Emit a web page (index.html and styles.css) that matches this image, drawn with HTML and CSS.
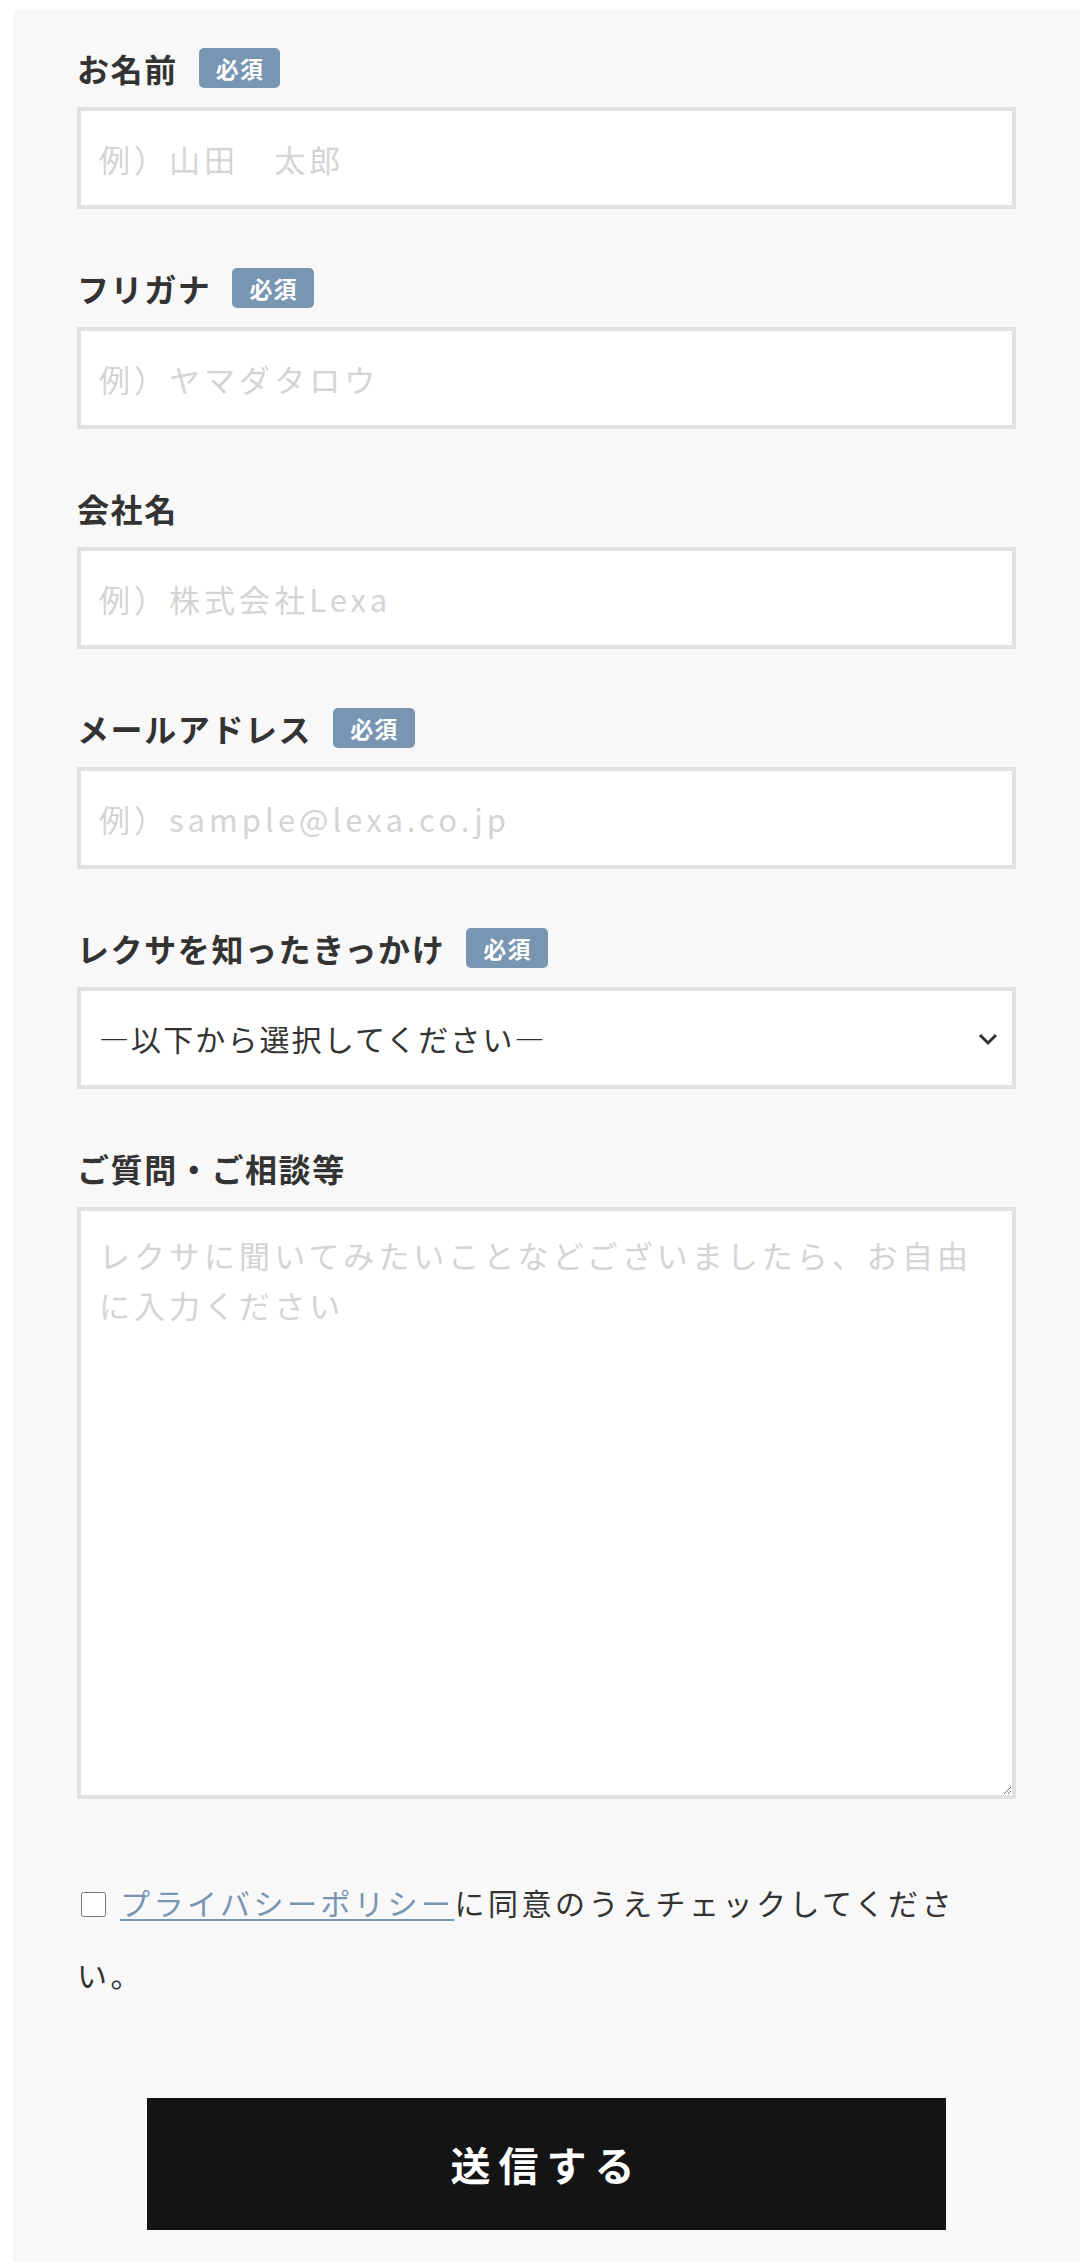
FILE: index.html
```html
<!DOCTYPE html>
<html lang="ja">
  <head>
    <meta charset="UTF-8" />
    <meta name="viewport" content="width=device-width, initial-scale=1.0" />
    <link rel="stylesheet" href="styles.css">
    <title>お問い合わせ</title>
  </head>
  <body>
    <div class="panel">
      <form class="contact" action="#" onsubmit="return false">
        <div class="contact__field">
          <div class="contact__head">
            <label class="contact__label" for="name">お名前</label>
            <span class="contact__badge">必須</span>
          </div>
          <input class="contact__input" id="name" type="text" placeholder="例）山田　太郎" />
        </div>

        <div class="contact__field">
          <div class="contact__head">
            <label class="contact__label" for="kana">フリガナ</label>
            <span class="contact__badge">必須</span>
          </div>
          <input class="contact__input" id="kana" type="text" placeholder="例）ヤマダタロウ" />
        </div>

        <div class="contact__field">
          <div class="contact__head">
            <label class="contact__label" for="company">会社名</label>
          </div>
          <input class="contact__input" id="company" type="text" placeholder="例）株式会社Lexa" />
        </div>

        <div class="contact__field">
          <div class="contact__head">
            <label class="contact__label" for="mail">メールアドレス</label>
            <span class="contact__badge">必須</span>
          </div>
          <input class="contact__input" id="mail" type="email" placeholder="例）sample@lexa.co.jp" />
        </div>

        <div class="contact__field">
          <div class="contact__head">
            <label class="contact__label" for="trigger">レクサを知ったきっかけ</label>
            <span class="contact__badge">必須</span>
          </div>
          <div class="contact__select-wrap">
            <select class="contact__select" id="trigger">
              <option>—以下から選択してください—</option>
              <option>検索エンジン</option>
              <option>SNS</option>
              <option>知人の紹介</option>
              <option>その他</option>
            </select>
            <svg class="contact__arrow" width="20" height="14" viewBox="0 0 20 14">
              <polyline points="2,3 10,11 18,3" fill="none" stroke="#333" stroke-width="3" />
            </svg>
          </div>
        </div>

        <div class="contact__field">
          <div class="contact__head">
            <label class="contact__label" for="message">ご質問・ご相談等</label>
          </div>
          <textarea class="contact__textarea" id="message" placeholder="レクサに聞いてみたいことなどございましたら、お自由に入力ください"></textarea>
        </div>

        <p class="contact__consent">
          <input class="contact__check" type="checkbox" id="agree" /><a class="contact__link" href="#">プライバシーポリシー</a>に同意のうえチェックしてください。
        </p>

        <button class="contact__submit" type="submit">送信する</button>
      </form>
    </div>
  </body>
</html>
```

FILE: styles.css
```css
*,
*::after,
*::before {
  box-sizing: border-box;
  margin: 0;
  padding: 0;
}

body {
  background: #fff;
  margin: 10px 10px 0 13px;
  font-family: "Noto Sans CJK JP", "Noto Sans", sans-serif;
  color: #333;
}

.panel {
  background: #f8f8f8;
  padding: 38px 64px 60px;
}

.contact__field {
  margin-bottom: 59px;
}

.contact__head {
  display: flex;
  align-items: center;
  min-height: 40px;
  margin-bottom: 19px;
}

.contact__label {
  font-size: 32px;
  font-weight: 700;
  letter-spacing: 0.05em;
  line-height: 1;
}

.contact__badge {
  display: inline-flex;
  align-items: center;
  height: 40px;
  margin-left: 21px;
  padding: 0 16px 0 17px;
  border-radius: 5px;
  background: #7895b2;
  color: #fff;
  font-size: 23px;
  font-weight: 700;
  letter-spacing: 0.05em;
}

.contact__input,
.contact__select,
.contact__textarea {
  display: block;
  width: 100%;
  border: 4px solid #e2e2e2;
  border-radius: 0;
  background: #fff;
  font-family: inherit;
  color: #333;
  outline: none;
}

.contact__input {
  height: 102px;
  padding: 0 18px;
  font-size: 31px;
  letter-spacing: 0.13em;
}

.contact__input::placeholder,
.contact__textarea::placeholder {
  color: #d4d4d4;
}

.contact__select-wrap {
  position: relative;
}

.contact__select {
  height: 102px;
  padding: 0 60px 0 18px;
  font-size: 30px;
  letter-spacing: 0.07em;
  appearance: none;
  -webkit-appearance: none;
}

.contact__arrow {
  position: absolute;
  top: 45px;
  right: 18px;
  pointer-events: none;
}

.contact__textarea {
  height: 592px;
  padding: 19px 18px;
  font-size: 31px;
  line-height: 50px;
  letter-spacing: 0.13em;
  resize: vertical;
}

.contact__consent {
  padding-top: 8px;
  font-size: 30px;
  line-height: 72px;
  letter-spacing: 3.5px;
}

.contact__check {
  width: 25px;
  height: 25px;
  margin: 0 14px 0 4px;
  vertical-align: -2px;
}

.contact__link {
  color: #7895b2;
  text-decoration: underline;
  text-underline-offset: 4px;
  text-decoration-thickness: 2px;
}

.contact__submit {
  display: block;
  width: 85%;
  height: 132px;
  margin: 88px auto 0;
  border: none;
  background: #141414;
  color: #fff;
  font-family: inherit;
  font-size: 40px;
  font-weight: 700;
  letter-spacing: 0.2em;
  cursor: pointer;
}
```
